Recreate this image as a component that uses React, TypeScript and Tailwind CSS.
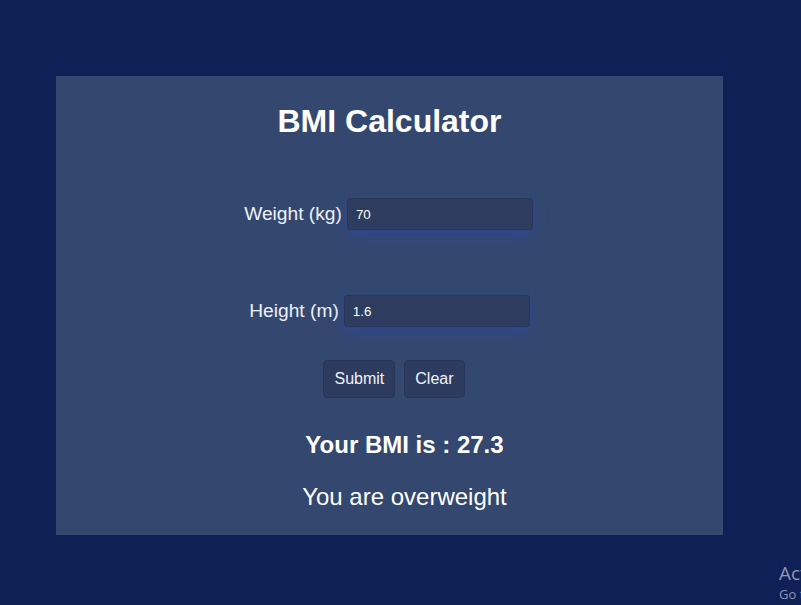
import { useState } from 'react';

const font = { fontFamily: '"Liberation Sans", Arial, sans-serif' };

function Field({ label, value, onChange }: { label: string; value: string; onChange: (v: string) => void }) {
  return (
    <div className="flex items-center justify-center gap-[5px]">
      <label className="text-[19.2px] leading-[22px] text-[#eef1f7]">{label}</label>
      <input
        value={value}
        onChange={e => onChange(e.target.value)}
        className="h-[32px] w-[186px] rounded-[3px] border border-[#27365a] bg-[#2d3c5f] px-[8px] text-[13.33px] text-white outline-none shadow-[0_5px_14px_rgba(40,70,210,0.35)]"
      />
    </div>
  );
}

export default function App() {
  const [weight, setWeight] = useState('70');
  const [height, setHeight] = useState('1.6');
  const [bmi, setBmi] = useState<number | null>(27.3);

  const submit = () => {
    const w = parseFloat(weight);
    const h = parseFloat(height);
    if (w > 0 && h > 0) setBmi(Math.round((w / (h * h)) * 10) / 10);
  };

  const status =
    bmi === null ? '' : bmi < 18.5 ? 'You are underweight' : bmi < 25 ? 'You are healthy' : 'You are overweight';

  return (
    <div className="relative h-[605px] w-full overflow-hidden bg-[#0f2056] pt-[76px]" style={font}>
      <div className="ml-[56px] flex w-[667px] flex-col items-center bg-[#34486f] pb-[24px] pt-[27px] text-white">
        <h1 className="text-[32px] font-bold leading-[37px]">BMI Calculator</h1>

        <div className="mt-[58px] pr-[2px]">
          <Field label="Weight (kg)" value={weight} onChange={setWeight} />
        </div>
        <div className="mt-[65px]">
          <Field label="Height (m)" value={height} onChange={setHeight} />
        </div>

        <div className="mt-[33px] flex gap-[9px] pl-[9px]">
          <button
            onClick={submit}
            className="h-[38px] rounded-[4px] border border-[#27355a] bg-[#2c3b5e] px-[10px] text-[16px] text-[#f1f3f8]"
          >
            Submit
          </button>
          <button
            onClick={() => {
              setWeight('');
              setHeight('');
              setBmi(null);
            }}
            className="h-[38px] rounded-[4px] border border-[#27355a] bg-[#2c3b5e] px-[10px] text-[16px] text-[#f1f3f8]"
          >
            Clear
          </button>
        </div>

        <div className="flex flex-col items-center pl-[30px]">
          <h2 className="mt-[33px] text-[24px] font-bold leading-[28px]">
            Your BMI is : {bmi ?? ''}
          </h2>
          <p className="mt-[24px] text-[24px] leading-[28px]">{status}</p>
        </div>
      </div>

      {/* Windows watermark */}
      <div
        className="absolute left-[779px] top-[561px] whitespace-nowrap text-[#8e96b2]"
        style={{ fontFamily: '"Open Sans", "Noto Sans", sans-serif' }}
      >
        <div className="text-[19px] leading-[24px]">Activate Windows</div>
        <div className="text-[13px] leading-[18px]">Go to Settings to activate Windows.</div>
      </div>
    </div>
  );
}
